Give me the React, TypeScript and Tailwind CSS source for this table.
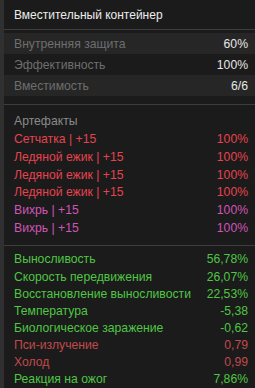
import React from "react";

const props = [
  { name: "Внутренняя защита", value: "60%" },
  { name: "Эффективность", value: "100%" },
  { name: "Вместимость", value: "6/6" },
];

const artifacts = [
  { name: "Сетчатка | +15", color: "text-[#e5434f]" },
  { name: "Ледяной ежик | +15", color: "text-[#e5434f]" },
  { name: "Ледяной ежик | +15", color: "text-[#e5434f]" },
  { name: "Ледяной ежик | +15", color: "text-[#e5434f]" },
  { name: "Вихрь | +15", color: "text-[#d055b8]" },
  { name: "Вихрь | +15", color: "text-[#d055b8]" },
];

const stats = [
  { name: "Выносливость", value: "56,78%", color: "text-[#4fc644]" },
  { name: "Скорость передвижения", value: "26,07%", color: "text-[#4fc644]" },
  { name: "Восстановление выносливости", value: "22,53%", color: "text-[#4fc644]" },
  { name: "Температура", value: "-5,38", color: "text-[#4fc644]" },
  { name: "Биологическое заражение", value: "-0,62", color: "text-[#4fc644]" },
  { name: "Пси-излучение", value: "0,79", color: "text-[#c04a4c]" },
  { name: "Холод", value: "0,99", color: "text-[#c04a4c]" },
  { name: "Реакция на ожог", value: "7,86%", color: "text-[#4fc644]" },
];

export default function App() {
  return (
    <div className="flex w-[255px] h-[388px] bg-[#1b1b1b] font-['Liberation_Sans',sans-serif] text-[12.2px] overflow-hidden">
      {/* left strip */}
      <div className="w-[4px] bg-[#303030] shrink-0" />
      <div className="flex-1 flex flex-col">
        <div className="h-[31px] flex items-center pl-[10px] text-[12px] text-[#ececec]">
          Вместительный контейнер
        </div>
        <div className="h-px bg-[#3d3d3d]" />
        <div className="pt-[3px] pb-[8px]">
          {props.map((p, i) => (
            <div
              key={p.name}
              className={`h-[21px] flex items-center justify-between pl-[10px] pr-[7px] ${
                i % 2 === 0 ? "bg-[#262626]" : ""
              }`}
            >
              <span className="text-[#6e6e6e]">{p.name}</span>
              <span className="text-[#e6e6e6]">{p.value}</span>
            </div>
          ))}
        </div>
        <div className="h-px bg-[#3d3d3d]" />
        <div className="pt-[7px] pb-[8px] pl-[10px] pr-[7px]">
          <div className="h-[18px] flex items-center text-[#8a8a8a]">Артефакты</div>
          {artifacts.map((a, i) => (
            <div key={i} className={`h-[17.8px] flex items-center justify-between ${a.color}`}>
              <span>{a.name}</span>
              <span>100%</span>
            </div>
          ))}
        </div>
        <div className="h-px bg-[#3d3d3d]" />
        <div className="pt-[5px] pl-[10px] pr-[7px]">
          {stats.map((s) => (
            <div key={s.name} className={`h-[17.14px] flex items-center justify-between ${s.color}`}>
              <span>{s.name}</span>
              <span>{s.value}</span>
            </div>
          ))}
        </div>
      </div>
    </div>
  );
}
